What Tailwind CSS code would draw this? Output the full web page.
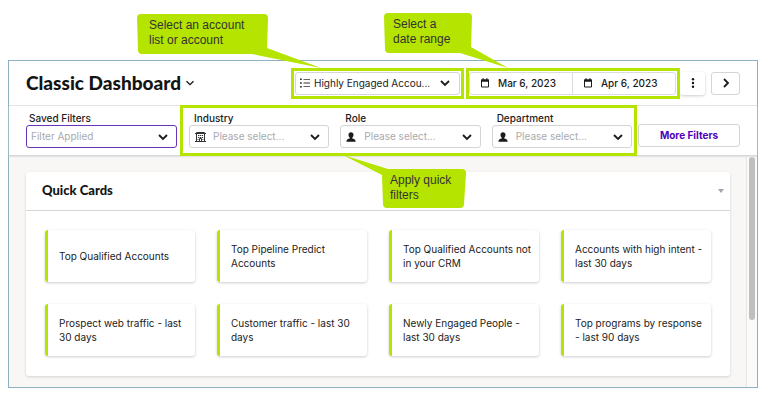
<!DOCTYPE html>
<html lang="en">
<head>
<meta charset="utf-8">
<meta name="viewport" content="width=device-width, initial-scale=1">
<title>Classic Dashboard</title>
<script src="https://cdn.jsdelivr.net/npm/@tailwindcss/browser@4"></script>
</head>
<body class="min-h-screen bg-white pt-[60px] pr-[9px] pb-4 pl-2 font-['Inter',sans-serif] text-[10px] text-[#1b1b1b]">
<svg class="hidden">
  <symbol id="chevron" viewBox="0 0 10 10"><path d="M1 3 5 7 9 3" fill="none" stroke="currentColor" stroke-width="1.800"/></symbol>
  <symbol id="calendar" viewBox="0 0 10 10"><path d="M1.500 2h7v7h-7z" fill="none" stroke="currentColor"/><path d="M1 1.500h8v2.300H1zM2.500.3h1.200v2H2.500zM6.300.3h1.200v2H6.300z" fill="currentColor"/></symbol>
  <symbol id="person" viewBox="0 0 10 10"><path d="M5 .2C3.500.2 2.500 1.200 2.500 2.700c0 1.300.5 2.200 1.200 2.900v.8C2.300 6.900.5 7.200.5 8.700V9.700h9V8.700c0-1.500-1.800-1.800-3.200-2.300v-.8c.7-.7 1.200-1.600 1.200-2.900C7.500 1.200 6.500.2 5 .2z" fill="currentColor"/></symbol>
</svg>
<div class="border border-[#8fb0c0] bg-[#f8f7f6]">
  <header class="flex h-[45px] items-center border-b border-[#e3e3e3] bg-white px-[17px]">
    <h1 class="flex flex-1 items-center gap-1 font-['Lato',sans-serif] text-[19px] font-black whitespace-nowrap text-[#141414]">Classic Dashboard
      <button type="button" aria-label="Choose dashboard"><svg class="size-[10px]" viewBox="0 0 10 10"><path d="M1.500 3.200 5 6.700 8.500 3.200" fill="none" stroke="currentColor" stroke-width="1.300"/></svg></button>
    </h1>
    <div class="relative mr-[2px] h-[31px] w-[173px] border-[3px] border-[#b4e400] p-px">
      <div class="relative flex h-full items-center rounded-[3px] border border-[#d5d5d5]">
        <svg class="pointer-events-none absolute left-1 size-[10px]" viewBox="0 0 10 10"><path d="M0 .5h1.800v1.500H0zM0 4.200h1.800v1.500H0zM0 8h1.800v1.500H0zM3.500 1h6.500v.8H3.500zM3.500 4.600h6.500v.8H3.500zM3.500 8.300h6.500v.8H3.500z" fill="#333"/></svg>
        <select aria-label="Account list" class="h-full w-full appearance-none pl-[18px] text-[10px] outline-none"><option>Highly Engaged Accou...</option></select>
        <svg class="pointer-events-none absolute right-[9px] size-[10px]"><use href="#chevron"/></svg>
      </div>
      <div class="pointer-events-none absolute -top-[57px] -left-[157px] h-[54px] w-[184px]">
        <svg class="absolute inset-0" width="184" height="54" viewBox="0 0 184 54"><path d="M4 0H127Q131 0 131 4L130 34 184 54 115 40H5Q1 40 1 36L0 4Q0 0 4 0Z" fill="#b4e400"/></svg>
        <p class="relative pt-1 pl-3 font-['Liberation_Sans',sans-serif] text-[12px] leading-[15px] text-[#333]">Select an account<br>list or account</p>
      </div>
    </div>
    <div class="relative h-[31px] w-[214px] border-[3px] border-[#b4e400] py-px pr-px">
      <div class="flex h-full rounded-[3px] border border-[#dcdcdc] font-medium">
        <button type="button" class="flex flex-1 items-center gap-2 border-r border-[#dcdcdc] pl-[10px]"><svg class="size-[10px]"><use href="#calendar"/></svg>Mar 6, 2023</button>
        <button type="button" class="flex flex-1 items-center gap-2 pl-[10px]"><svg class="size-[10px]"><use href="#calendar"/></svg>Apr 6, 2023</button>
      </div>
      <div class="pointer-events-none absolute -top-[58px] -left-[85px] h-[55px] w-[124px]">
        <svg class="absolute inset-0" width="124" height="55" viewBox="0 0 124 55"><path d="M4 0H84Q88 0 88 4L87 34 124 55 76 40H5Q1 40 1 36L0 4Q0 0 4 0Z" fill="#b4e400"/></svg>
        <p class="relative pt-1 pl-[9px] font-['Liberation_Sans',sans-serif] text-[12px] leading-[15px] text-[#333]">Select a<br>date range</p>
      </div>
    </div>
    <button type="button" aria-label="More options" class="mr-[6px] flex h-[23px] w-[25px] items-center justify-center rounded-[3px] shadow-[0_1px_3px_rgba(0,0,0,0.2)]"><svg class="size-[10px]" viewBox="0 0 10 10" fill="#111"><circle cx="5" cy="1.200" r="1.200"/><circle cx="5" cy="5" r="1.200"/><circle cx="5" cy="8.800" r="1.200"/></svg></button>
    <button type="button" aria-label="Next" class="flex h-[23px] w-[29px] items-center justify-center rounded-[3px] border border-[#d5d5d5]"><svg class="size-[10px] -rotate-90"><use href="#chevron"/></svg></button>
  </header>

  <section aria-label="Filters" class="relative z-10 flex h-[50px] border-b border-[#d8d8d8] bg-white px-[17px] font-medium shadow-[0_1px_1px_#e3e3e3]">
    <div class="mr-[3px] w-[151px] pt-[6px]">
      <label for="saved" class="block pl-[3px] leading-[13px]">Saved Filters</label>
      <div class="relative flex h-[23px] items-center">
        <select id="saved" class="h-full w-full appearance-none rounded-[3px] border border-[#6a35b8] pl-1 text-[10px] font-normal text-[#a9a9ad] outline-none"><option>Filter Applied</option></select>
        <svg class="pointer-events-none absolute right-[9px] size-[10px]"><use href="#chevron"/></svg>
      </div>
    </div>
    <div class="relative -my-px mr-px grid flex-1 grid-cols-3 gap-[11px] border-[3px] border-[#b4e400] pt-1 pr-[2px] pl-[6px]">
      <div>
        <label for="industry" class="block pl-[5px] leading-[13px]">Industry</label>
        <div class="relative flex h-[23px] items-center">
          <svg class="pointer-events-none absolute left-[6px] size-[11px]" viewBox="0 0 11 11" fill="none" stroke="#333"><path d="M1.500 10V1.500h8V10M0 10.500h11M0 2.500h11M4.500 10V7.500h2v2.500"/><path d="M3 4.500h1.300m.6 0h1.300m.6 0h1.300M3 6.500h1.300m.6 0h1.300m.6 0h1.300M2.500 8.500h1M7.500 8.500h1"/></svg>
          <select id="industry" class="h-full w-full appearance-none rounded-[3px] border border-[#d5d5d5] pl-[23px] text-[10px] font-normal text-[#a9a9ad] outline-none"><option>Please select...</option></select>
          <svg class="pointer-events-none absolute right-[9px] size-[10px]"><use href="#chevron"/></svg>
        </div>
      </div>
      <div>
        <label for="role" class="block pl-[5px] leading-[13px]">Role</label>
        <div class="relative flex h-[23px] items-center">
          <svg class="pointer-events-none absolute left-[6px] size-[10px]"><use href="#person"/></svg>
          <select id="role" class="h-full w-full appearance-none rounded-[3px] border border-[#d5d5d5] pl-[23px] text-[10px] font-normal text-[#a9a9ad] outline-none"><option>Please select...</option></select>
          <svg class="pointer-events-none absolute right-[9px] size-[10px]"><use href="#chevron"/></svg>
        </div>
      </div>
      <div>
        <label for="department" class="block pl-[5px] leading-[13px]">Department</label>
        <div class="relative flex h-[23px] items-center">
          <svg class="pointer-events-none absolute left-[6px] size-[10px]"><use href="#person"/></svg>
          <select id="department" class="h-full w-full appearance-none rounded-[3px] border border-[#d5d5d5] pl-[23px] text-[10px] font-normal text-[#a9a9ad] outline-none"><option>Please select...</option></select>
          <svg class="pointer-events-none absolute right-[9px] size-[10px]"><use href="#chevron"/></svg>
        </div>
      </div>
      <div class="pointer-events-none absolute top-[47px] left-[160px] h-[53px] w-[123px]">
        <svg class="absolute inset-0" width="123" height="53" viewBox="0 0 123 53"><path d="M0 0 45 14H119Q123 14 123 18L121 49Q121 53 117 53H44Q40 53 40 49L39 20Z" fill="#b4e400"/></svg>
        <p class="relative pt-[18px] pl-[47px] font-['Liberation_Sans',sans-serif] text-[12px] leading-[15px] text-[#333]">Apply quick<br>filters</p>
      </div>
    </div>
    <button type="button" class="mt-[18px] h-[23px] w-[102px] rounded-[3px] border border-[#d5d5d5] font-bold text-[#5000b8]">More Filters</button>
  </section>

  <div class="flex">
    <main class="flex-1 pt-4 pr-4 pb-[11px] pl-[17px]">
      <section class="rounded-[3px] bg-white shadow-[0_1px_3px_rgba(0,0,0,0.15)]">
        <div class="flex h-[39px] items-center justify-between border-b border-[#d5d5d5] pr-[6px] pl-4">
          <h2 class="font-['Lato',sans-serif] text-[13px] font-black text-[#141414]">Quick Cards</h2>
          <button type="button" aria-label="Collapse" class="text-[#a3a3a8]"><svg width="6" height="4" viewBox="0 0 6 4"><path d="M0 0h6L3 4z" fill="currentColor"/></svg></button>
        </div>
        <div class="grid grid-cols-4 gap-[22px] px-[19px] pt-[19px] pb-[20px] leading-[14px]">
          <a href="#" class="flex h-[52px] items-center rounded-[3px] border-l-[3px] border-[#b4e400] pr-1 pl-[11px] shadow-[0_1px_3px_rgba(0,0,0,0.2)]">Top Qualified Accounts</a>
          <a href="#" class="flex h-[52px] items-center rounded-[3px] border-l-[3px] border-[#b4e400] pr-1 pl-[11px] shadow-[0_1px_3px_rgba(0,0,0,0.2)]">Top Pipeline Predict Accounts</a>
          <a href="#" class="flex h-[52px] items-center rounded-[3px] border-l-[3px] border-[#b4e400] pr-1 pl-[11px] shadow-[0_1px_3px_rgba(0,0,0,0.2)]">Top Qualified Accounts not in your CRM</a>
          <a href="#" class="flex h-[52px] items-center rounded-[3px] border-l-[3px] border-[#b4e400] pr-1 pl-[11px] shadow-[0_1px_3px_rgba(0,0,0,0.2)]">Accounts with high intent - last 30 days</a>
          <a href="#" class="flex h-[52px] items-center rounded-[3px] border-l-[3px] border-[#b4e400] pr-1 pl-[11px] shadow-[0_1px_3px_rgba(0,0,0,0.2)]">Prospect web traffic - last 30 days</a>
          <a href="#" class="flex h-[52px] items-center rounded-[3px] border-l-[3px] border-[#b4e400] pr-1 pl-[11px] shadow-[0_1px_3px_rgba(0,0,0,0.2)]">Customer traffic - last 30 days</a>
          <a href="#" class="flex h-[52px] items-center rounded-[3px] border-l-[3px] border-[#b4e400] pr-1 pl-[11px] shadow-[0_1px_3px_rgba(0,0,0,0.2)]">Newly Engaged People - last 30 days</a>
          <a href="#" class="flex h-[52px] items-center rounded-[3px] border-l-[3px] border-[#b4e400] pr-1 pl-[11px] shadow-[0_1px_3px_rgba(0,0,0,0.2)]">Top programs by response - last 90 days</a>
        </div>
      </section>
    </main>
    <div class="w-[11px] border-l border-[#e5e5e5] bg-[#fafafa] px-[2px] pt-px"><div class="h-[163px] w-[6px] rounded-full bg-[#bfbfbf]"></div></div>
  </div>
</div>
</body>
</html>
